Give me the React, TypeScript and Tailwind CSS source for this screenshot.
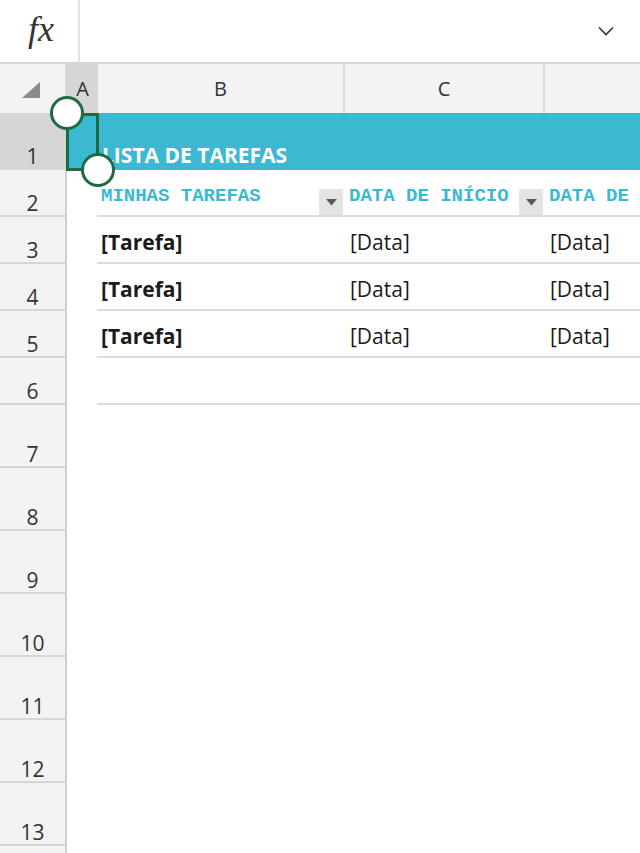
import React from "react";

const ROWS: { n: number; h: string }[] = [
  { n: 1, h: "h-[57px]" },
  { n: 2, h: "h-[47px]" },
  { n: 3, h: "h-[47px]" },
  { n: 4, h: "h-[47px]" },
  { n: 5, h: "h-[47px]" },
  { n: 6, h: "h-[47px]" },
  { n: 7, h: "h-[63px]" },
  { n: 8, h: "h-[63px]" },
  { n: 9, h: "h-[63px]" },
  { n: 10, h: "h-[63px]" },
  { n: 11, h: "h-[63px]" },
  { n: 12, h: "h-[63px]" },
  { n: 13, h: "h-[63px]" },
  { n: 14, h: "h-[63px]" },
];

const FilterButton = () => (
  <div className="w-[24px] h-[26px] bg-[#e4e4e4] flex items-start justify-center pt-[10px] mt-[19px]">
    <svg width="11" height="7" viewBox="0 0 11 7">
      <path d="M0 0 L11 0 L5.5 6.5 Z" fill="#595959" />
    </svg>
  </div>
);

const TableRow = ({ task, a, b }: { task: string; a: string; b: string }) => (
  <div className="flex h-full items-center pt-[6px] text-[21px] text-[#1b1b1b] pl-[4px]">
    <div className="w-[243px] font-bold">{task}</div>
    <div className="w-[200px] pl-[6px]">{a}</div>
    <div className="flex-1 pl-[6px] whitespace-nowrap">{b}</div>
  </div>
);

function RowContent({ n }: { n: number }) {
  if (n === 1) {
    return (
      <div className="flex h-full bg-[#3bb8d2]">
        <div className="w-[31px]" />
        <div className="flex-1 flex items-end pb-[3px] pl-[4px] text-[21px] leading-[24px] font-bold text-white">
          LISTA DE TAREFAS
        </div>
      </div>
    );
  }
  if (n >= 2 && n <= 6) {
    let inner: React.ReactNode = null;
    if (n === 2) {
      inner = (
        <div
          className="flex h-full items-start text-[19px] font-bold text-[#3bb8d2]"
          style={{ fontFamily: '"Liberation Mono", "Courier New", monospace' }}
        >
          <div className="w-[222px] pl-[4px] pt-[12px]">MINHAS TAREFAS</div>
          <FilterButton />
          <div className="w-[176px] pl-[6px] pt-[12px]">DATA DE INÍCIO</div>
          <FilterButton />
          <div className="flex-1 pl-[6px] pt-[12px] whitespace-nowrap">DATA DE</div>
        </div>
      );
    } else if (n <= 5) {
      inner = <TableRow task="[Tarefa]" a="[Data]" b="[Data]" />;
    }
    return (
      <div className="flex h-full">
        <div className="w-[30px]" />
        <div className="flex-1 h-full border-b-2 border-[#dcdcdc]">{inner}</div>
      </div>
    );
  }
  return <div className="h-full" />;
}

export default function App() {
  return (
    <div
      className="w-[640px] h-[853px] overflow-hidden bg-white flex flex-col text-[#333]"
      style={{ fontFamily: '"Open Sans", "Noto Sans", sans-serif' }}
    >
      {/* formula bar */}
      <div className="h-[64px] flex border-b-2 border-[#d6d6d6] shrink-0">
        <div className="w-[80px] border-r-2 border-[#e2e2e2] flex items-center justify-center">
          <span
            className="italic text-[36px] text-[#333] leading-none -mt-[4px] ml-[4px]"
            style={{ fontFamily: '"Liberation Serif", "Times New Roman", serif' }}
          >
            fx
          </span>
        </div>
        <div className="flex-1 flex items-center justify-end pr-[26px]">
          <svg width="16" height="10" viewBox="0 0 16 10">
            <path d="M1 1.5 L8 8.5 L15 1.5" fill="none" stroke="#333" strokeWidth="1.6" />
          </svg>
        </div>
      </div>

      {/* column headers */}
      <div className="h-[49px] flex shrink-0 bg-[#f3f3f3] text-[20px] text-[#333]">
        <div className="w-[67px] flex items-end justify-end pb-[15px] pr-[25px] border-r-2 border-[#d9d9d9]">
          <svg width="18" height="16" viewBox="0 0 18 16">
            <path d="M18 0 L18 16 L0 16 Z" fill="#8a8a8a" />
          </svg>
        </div>
        <div className="w-[31px] bg-[#d6d6d6] flex items-center justify-center">A</div>
        <div className="w-[247px] flex items-center justify-center border-r-2 border-[#dcdcdc]">B</div>
        <div className="w-[200px] flex items-center justify-center border-r-2 border-[#dcdcdc]">C</div>
        <div className="flex-1" />
      </div>

      {/* sheet */}
      <div className="relative flex-1">
        {ROWS.map((r) => (
          <div key={r.n} className={`flex ${r.h}`}>
            <div
              className={`w-[67px] shrink-0 flex items-end justify-center pb-[2px] text-[21px] leading-[20px] border-r-2 border-b-2 border-r-[#cfcfcf] border-b-[#d6d6d6] ${
                r.n === 1 ? "bg-[#d6d6d6]" : "bg-[#f3f3f3]"
              }`}
            >
              {r.n < 14 ? r.n : ""}
            </div>
            <div className="flex-1">
              <RowContent n={r.n} />
            </div>
          </div>
        ))}

        {/* selection of A1 */}
        <div className="absolute left-[66px] top-0 w-[33px] h-[58px] border-[3px] border-[#1e6b41]" />
        <div className="absolute left-[50px] -top-[17px] w-[34px] h-[34px] rounded-full bg-white border-[3px] border-[#1e6b41]" />
        <div className="absolute left-[81px] top-[40px] w-[34px] h-[34px] rounded-full bg-white border-[3px] border-[#1e6b41]" />
      </div>
    </div>
  );
}
